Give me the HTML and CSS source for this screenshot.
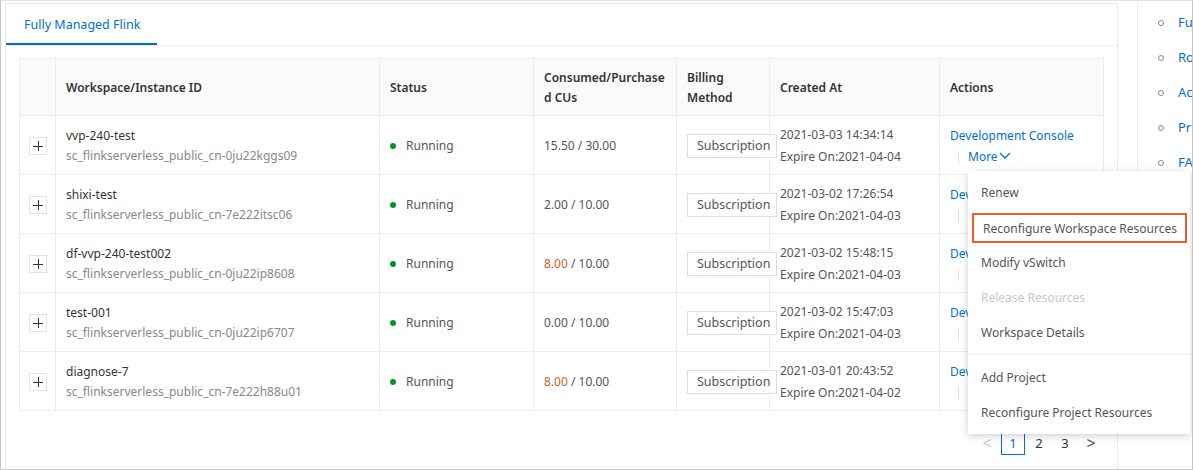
FILE: index.html
```html
<!DOCTYPE html>
<html>
<head>
	<meta charset="utf-8">
	<title>Fully Managed Flink</title>
	<link rel="stylesheet" href="styles.css">
</head>
<body>
	<div class="frame">
		<div class="panel">
			<div class="tabs">
				<div class="tab active">Fully Managed Flink</div>
			</div>

			<table class="grid">
				<colgroup>
					<col style="width:36px">
					<col style="width:324px">
					<col style="width:154px">
					<col style="width:143px">
					<col style="width:93px">
					<col style="width:170px">
					<col style="width:164px">
				</colgroup>
				<thead>
					<tr>
						<th></th>
						<th>Workspace/Instance ID</th>
						<th>Status</th>
						<th>Consumed/Purchase<br>d CUs</th>
						<th>Billing<br>Method</th>
						<th>Created At</th>
						<th>Actions</th>
					</tr>
				</thead>
				<tbody>
					<tr>
						<td class="exp"><span class="plus"></span></td>
						<td><div class="name">vvp-240-test</div><div class="id">sc_flinkserverless_public_cn-0ju22kggs09</div></td>
						<td><span class="dot"></span>Running</td>
						<td class="cu">15.50 / 30.00</td>
						<td class="bill"><span class="tag">Subscription</span></td>
						<td class="date">2021-03-03 14:34:14<br>Expire On:2021-04-04</td>
						<td class="act"><a>Development Console</a><div class="more"><span class="sep"></span><a>More<svg width="12" height="9" viewBox="0 0 12 9"><path d="M1 2l5 5 5-5" fill="none" stroke="#0070cc" stroke-width="1.3"/></svg></a></div></td>
					</tr>
					<tr>
						<td class="exp"><span class="plus"></span></td>
						<td><div class="name">shixi-test</div><div class="id">sc_flinkserverless_public_cn-7e222itsc06</div></td>
						<td><span class="dot"></span>Running</td>
						<td class="cu">2.00 / 10.00</td>
						<td class="bill"><span class="tag">Subscription</span></td>
						<td class="date">2021-03-02 17:26:54<br>Expire On:2021-04-03</td>
						<td class="act"><a>Development Console</a><div class="more"><span class="sep"></span><a>More</a></div></td>
					</tr>
					<tr>
						<td class="exp"><span class="plus"></span></td>
						<td><div class="name">df-vvp-240-test002</div><div class="id">sc_flinkserverless_public_cn-0ju22ip8608</div></td>
						<td><span class="dot"></span>Running</td>
						<td class="cu"><span class="warn">8.00</span> / 10.00</td>
						<td class="bill"><span class="tag">Subscription</span></td>
						<td class="date">2021-03-02 15:48:15<br>Expire On:2021-04-03</td>
						<td class="act"><a>Development Console</a><div class="more"><span class="sep"></span><a>More</a></div></td>
					</tr>
					<tr>
						<td class="exp"><span class="plus"></span></td>
						<td><div class="name">test-001</div><div class="id">sc_flinkserverless_public_cn-0ju22ip6707</div></td>
						<td><span class="dot"></span>Running</td>
						<td class="cu">0.00 / 10.00</td>
						<td class="bill"><span class="tag">Subscription</span></td>
						<td class="date">2021-03-02 15:47:03<br>Expire On:2021-04-03</td>
						<td class="act"><a>Development Console</a><div class="more"><span class="sep"></span><a>More</a></div></td>
					</tr>
					<tr>
						<td class="exp"><span class="plus"></span></td>
						<td><div class="name">diagnose-7</div><div class="id">sc_flinkserverless_public_cn-7e222h88u01</div></td>
						<td><span class="dot"></span>Running</td>
						<td class="cu"><span class="warn">8.00</span> / 10.00</td>
						<td class="bill"><span class="tag">Subscription</span></td>
						<td class="date">2021-03-01 20:43:52<br>Expire On:2021-04-02</td>
						<td class="act"><a>Development Console</a><div class="more"><span class="sep"></span><a>More</a></div></td>
					</tr>
				</tbody>
			</table>

			<div class="pager">
				<span class="arrow off">&lt;</span>
				<span class="page current">1</span>
				<span class="page">2</span>
				<span class="page">3</span>
				<span class="arrow">&gt;</span>
			</div>

			<ul class="menu">
				<li>Renew</li>
				<li class="picked">Reconfigure Workspace Resources</li>
				<li>Modify vSwitch</li>
				<li class="disabled">Release Resources</li>
				<li class="divide">Workspace Details</li>
				<li>Add Project</li>
				<li>Reconfigure Project Resources</li>
			</ul>
		</div>

		<ul class="side">
			<li><a>Fully Managed Flink</a></li>
			<li><a>Roles</a></li>
			<li><a>Actions</a></li>
			<li><a>Prices</a></li>
			<li><a>FAQ</a></li>
		</ul>
	</div>
</body>
</html>
```

FILE: styles.css
```css
body {
	margin: 0;
	font-family: "Noto Sans", "Open Sans", sans-serif;
	font-size: 12px;
	color: #333;
}
.frame {
	width: 1193px;
	height: 470px;
	box-sizing: border-box;
	border: 1px solid #c6c6c6;
	border-top-color: #e2e2e2;
	display: flex;
	overflow: hidden;
	position: relative;
}
.panel {
	flex: none;
	width: 1113px;
	margin: 2px 0 0 4px;
	border: 1px solid #e8e8e8;
	border-bottom: none;
	box-sizing: border-box;
}
.tabs {
	display: flex;
	height: 42px;
	border-bottom: 1px solid #eee;
	box-sizing: border-box;
}
.tab {
	width: 151px;
	padding-left: 18px;
	box-sizing: border-box;
	line-height: 41px;
	font-size: 12.5px;
	color: #0070cc;
	border-bottom: 2px solid #0070cc;
}
.grid {
	margin: 12px 0 0 13px;
	width: 1084px;
	border-collapse: collapse;
	table-layout: fixed;
}
.grid th,
.grid td {
	border: 1px solid #ececec;
	padding: 1px 10px 0;
	text-align: left;
	vertical-align: middle;
	white-space: nowrap;
}
.grid th {
	background: #fafafa;
	height: 55px;
	font-weight: 600;
	line-height: 20px;
	color: #333;
}
.grid td {
	height: 56px;
	padding-top: 2px;
	line-height: 20px;
	color: #555;
}
.grid td.exp {
	padding: 0;
	height: 58px;
	text-align: center;
}
.plus {
	display: inline-block;
	width: 18px;
	height: 18px;
	border: 1px solid #e2e2e2;
	box-sizing: border-box;
	vertical-align: middle;
	position: relative;
}
.plus::before,
.plus::after {
	content: "";
	position: absolute;
	background: #333;
}
.plus::before {
	left: 3px;
	top: 8px;
	width: 10px;
	height: 1px;
}
.plus::after {
	left: 8px;
	top: 3px;
	width: 1px;
	height: 10px;
}
.name {
	color: #333;
}
.id {
	color: #888;
}
.dot {
	display: inline-block;
	width: 6px;
	height: 6px;
	border-radius: 50%;
	background: #009431;
	margin: 0 10px 0 0;
	vertical-align: middle;
	position: relative;
	top: -1px;
}
.cu {
	color: #333;
}
.warn {
	color: #d0621c;
}
.grid td.bill {
	overflow: visible;
}
.tag {
	display: inline-block;
	width: 90px;
	height: 24px;
	line-height: 22px;
	padding-left: 9px;
	box-sizing: border-box;
	border: 1px solid #ddd;
	background: #fff;
	color: #555;
	font-size: 12.5px;
	position: relative;
	z-index: 1;
}
.grid td.date {
	line-height: 22px;
}
.grid td.act {
	line-height: 21px;
}
.act a {
	color: #0070cc;
}
.more {
	display: flex;
	align-items: center;
	padding-left: 8px;
}
.sep {
	width: 1px;
	height: 12px;
	background: #ddd;
	margin-right: 9px;
}
.more svg {
	margin-left: 1px;
	vertical-align: 1px;
}
.pager {
	display: flex;
	align-items: center;
	justify-content: flex-end;
	margin: 20px 14px 0 0;
	gap: 2px;
	color: #333;
	font-size: 13px;
}
.pager span {
	width: 24px;
	height: 24px;
	line-height: 24px;
	text-align: center;
	box-sizing: border-box;
}
.pager .current {
	border: 1px solid #0070cc;
	color: #0070cc;
	line-height: 22px;
}
.pager .arrow {
	font-size: 16px;
	color: #555;
}
.pager .off {
	color: #ccc;
}
.menu {
	position: absolute;
	left: 967px;
	top: 170px;
	width: 222px;
	margin: 0;
	padding: 4px 0;
	list-style: none;
	background: #fff;
	box-shadow: 0 2px 8px rgba(0, 0, 0, 0.18);
	z-index: 5;
}
.menu li {
	height: 35px;
	line-height: 36px;
	padding-left: 13px;
	color: #555;
	box-sizing: border-box;
}
.menu .picked {
	margin: 3px 3px 2px 4px;
	padding-left: 9px;
	border: 2px solid #f05a30;
	height: 30px;
	line-height: 27px;
}
.menu .disabled {
	color: #c8c8c8;
}
.menu .divide {
	height: 40px;
	border-bottom: 1px solid #eee;
	margin-bottom: 5px;
}
.side {
	margin: 0 0 0 19px;
	padding: 4px 0 0 20px;
	list-style: none;
	border-left: 1px solid #eee;
	height: 170px;
	white-space: nowrap;
	font-size: 13px;
}
.side li {
	height: 35px;
	line-height: 35px;
	display: flex;
	align-items: center;
}
.side li::before {
	content: "";
	width: 4px;
	height: 4px;
	border: 1px solid #888;
	border-radius: 50%;
	margin-right: 14px;
}
.side a {
	color: #0070cc;
}
```
